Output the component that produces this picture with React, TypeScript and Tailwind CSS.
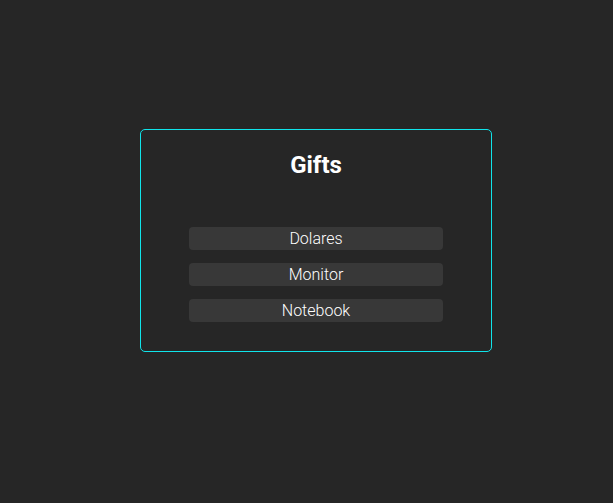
import React from 'react'

const gifts = ['Dolares', 'Monitor', 'Notebook']

function App() {
  return (
    <div className="min-h-[503px] w-full bg-[#262626] pt-[129px] pl-[140px]" style={{ fontFamily: 'Roboto, "Noto Sans", sans-serif' }}>
      <div className="w-[352px] h-[223px] border border-[#10e4ea] rounded-[5px] pt-[19px] flex flex-col items-center">
        <h2 className="text-2xl leading-8 font-bold text-white">Gifts</h2>
        <ul className="mt-[46px] flex flex-col gap-[13px]">
          {gifts.map((g) => (
            <li
              key={g}
              className="w-[254px] h-[23px] rounded-[4px] bg-[#383838] text-white font-light text-base leading-[23px] text-center"
            >
              {g}
            </li>
          ))}
        </ul>
      </div>
    </div>
  )
}

export default App
